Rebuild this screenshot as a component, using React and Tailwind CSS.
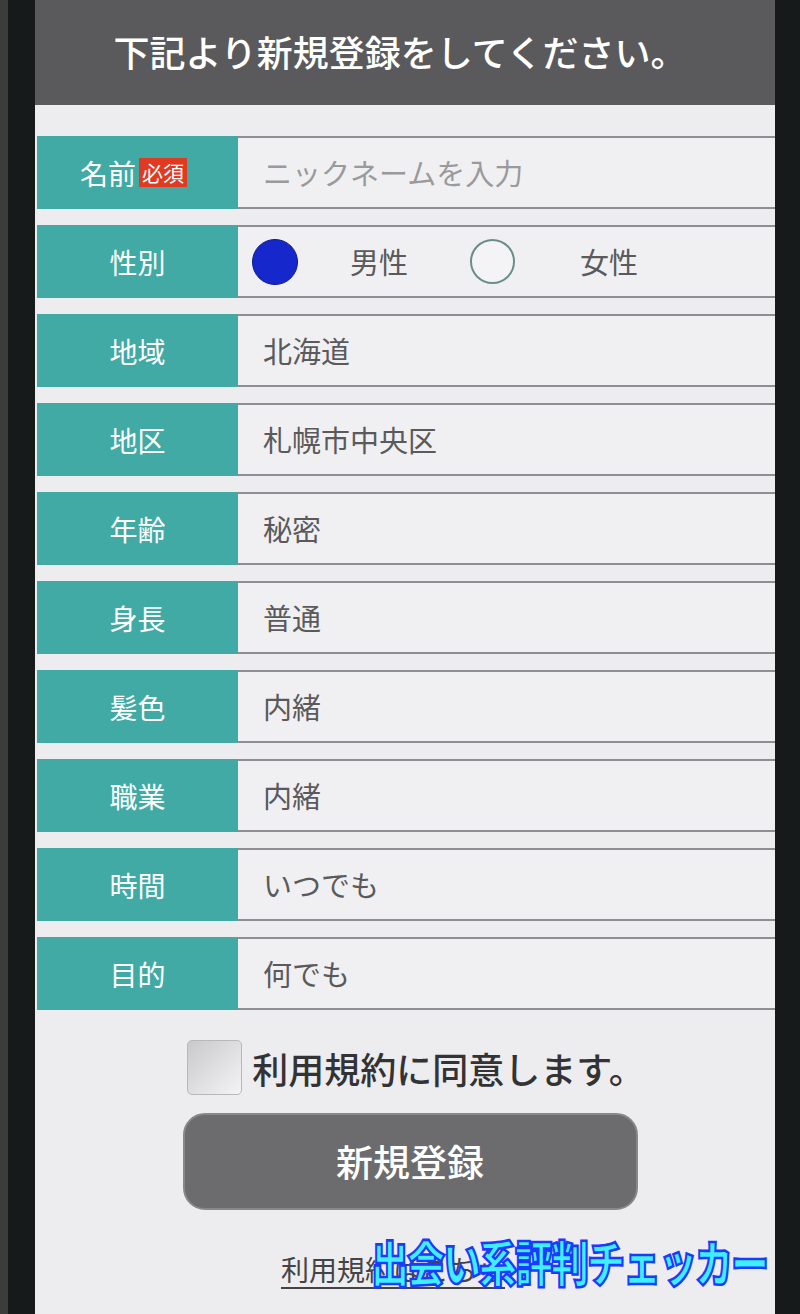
import React from "react";

const rows = [
  { label: "地域", value: "北海道" },
  { label: "地区", value: "札幌市中央区" },
  { label: "年齢", value: "秘密" },
  { label: "身長", value: "普通" },
  { label: "髪色", value: "内緒" },
  { label: "職業", value: "内緒" },
  { label: "時間", value: "いつでも" },
  { label: "目的", value: "何でも" },
];

function Row({ label, children }) {
  return (
    <div className="flex h-[73px]">
      <div className="w-[201px] shrink-0 bg-[#41aaa5] flex items-center justify-center text-white text-[28px] leading-none">
        {label}
      </div>
      <div className="flex-1 flex items-center bg-[#f0f0f2] border-t-2 border-b-2 border-[#8f8f93] pl-[25px] text-[29px] leading-none text-[#5a5a5c]">
        {children}
      </div>
    </div>
  );
}

export default function App() {
  return (
    <div
      className="w-[800px] h-[1314px] bg-[#171a1a] flex overflow-hidden"
      style={{ fontFamily: '"Noto Sans CJK JP", "Noto Sans", sans-serif' }}
    >
      <div className="w-[8px] bg-[#3a3d3a] shrink-0" />
      <div className="w-[27px] shrink-0" />
      <div className="w-[740px] shrink-0 bg-[#ededef] flex flex-col relative">
        <div className="h-[105px] bg-[#5a5a5c] flex items-center justify-center text-white text-[36px] font-medium leading-none pb-[4px] pr-[10px]">
          下記より新規登録をしてください。
        </div>
        <div className="flex flex-col gap-[16px] pt-[31px] pl-[2px]">
          <Row label={
            <span className="flex items-center gap-[3px] pr-[8px]">
              名前
              <span className="bg-[#e03a22] text-white text-[21px] px-[3px] py-[4px] leading-none">必須</span>
            </span>
          }>
            <span className="text-[#9a9a9c]">ニックネームを入力</span>
          </Row>
          <Row label="性別">
            <div className="flex items-center -ml-[11px]">
              <span className="w-[46px] h-[46px] rounded-full bg-[#1628cc] border border-[#0d1a8a]" />
              <span className="ml-[52px]">男性</span>
              <span className="ml-[62px] w-[45px] h-[45px] rounded-full border-[2.5px] border-[#6b8d8a] bg-[#f4f4f6]" />
              <span className="ml-[65px]">女性</span>
            </div>
          </Row>
          {rows.map((r) => (
            <Row key={r.label} label={r.label}>
              {r.value}
            </Row>
          ))}
        </div>
        <div className="flex items-center justify-center mt-[30px] gap-[10px] pl-[22px]">
          <span className="w-[55px] h-[55px] rounded-[5px] border border-[#b8b8bb] bg-gradient-to-br from-[#c9c9cc] to-[#f4f4f6]" />
          <span className="text-[36px] leading-none text-[#333335] font-medium">利用規約に同意します。</span>
        </div>
        <div className="flex justify-center mt-[18px] pl-[10px]">
          <div className="w-[455px] h-[97px] rounded-[22px] bg-[#6c6c6e] border-2 border-[#88888a] flex items-center justify-center text-white text-[37px] font-medium">
            新規登録
          </div>
        </div>
        <div className="mt-[38px] pl-[246px]">
          <span className="text-[28px] text-[#444] underline underline-offset-[6px] decoration-2 whitespace-nowrap">利用規約はこちら</span>
        </div>
        <div className="absolute left-[336px] top-[1236px] whitespace-nowrap text-[38px] font-black leading-none text-[#3ef0ff] [-webkit-text-stroke:2px_#1a3aff] tracking-[-2px] scale-y-[1.3] origin-top">
          出会い系評判チェッカー
        </div>
      </div>
    </div>
  );
}
